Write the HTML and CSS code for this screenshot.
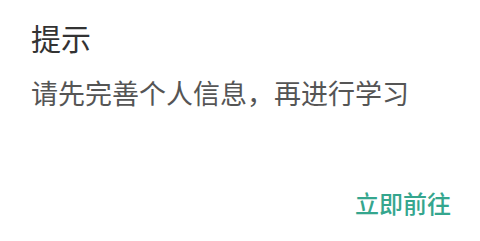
FILE: index.html
```html
<!DOCTYPE html>
<html lang="zh-CN">

<head>
    <meta charset="UTF-8">
    <meta name="viewport" content="width=device-width, initial-scale=1.0">
    <title>提示</title>
    <link rel="stylesheet" href="styles.css">
</head>

<body>
    <div class="dialog">
        <h2 class="dialog-title">提示</h2>
        <p class="dialog-message">请先完善个人信息，再进行学习</p>
        <div class="dialog-actions">
            <button class="dialog-btn">立即前往</button>
        </div>
    </div>
</body>

</html>
```

FILE: styles.css
```css
body {
    margin: 0;
    padding: 0;
    background-color: #fff;
    font-family: "Noto Sans CJK SC", "Noto Sans", sans-serif;
}

.dialog {
    width: 480px;
    height: 241px;
    box-sizing: border-box;
    padding: 22px 29px 0 31px;
    background-color: #fff;
}

.dialog-title {
    margin: 0;
    font-size: 30px;
    line-height: 30px;
    font-weight: 400;
    color: #333;
}

.dialog-message {
    margin: 27px 0 0 0;
    font-size: 27px;
    line-height: 27px;
    color: #555;
}

.dialog-actions {
    display: flex;
    justify-content: flex-end;
    margin-top: 85px;
}

.dialog-btn {
    padding: 0;
    border: none;
    background: none;
    font-family: inherit;
    font-size: 24px;
    line-height: 24px;
    font-weight: 500;
    color: #35a68e;
    cursor: pointer;
}
```
